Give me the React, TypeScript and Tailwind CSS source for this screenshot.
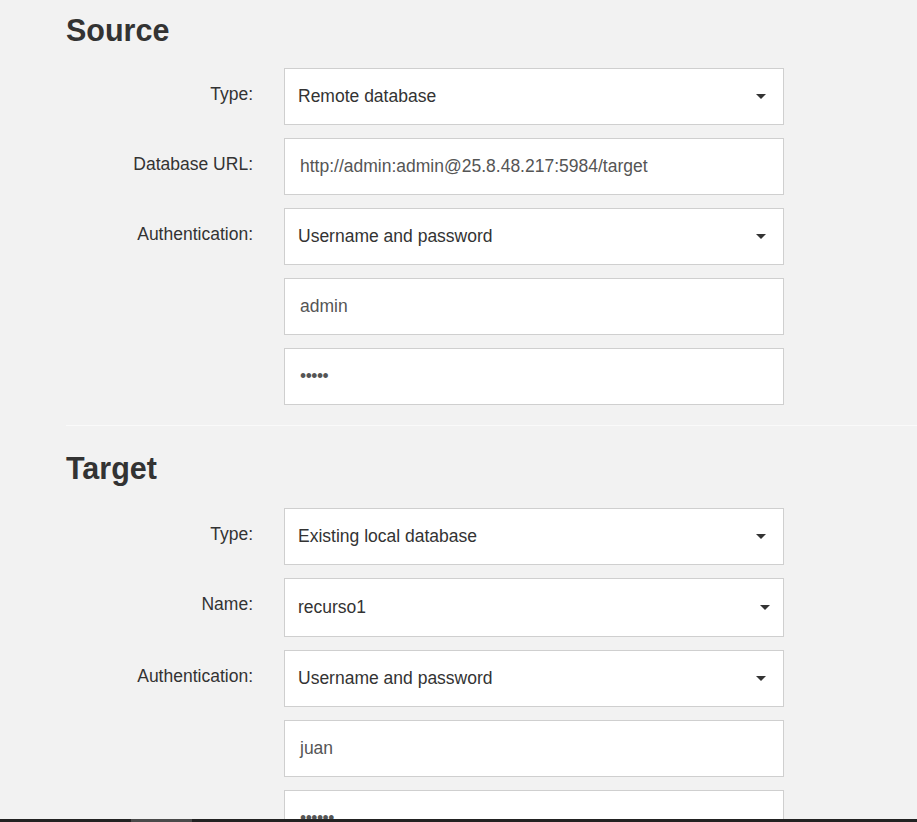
import React from "react";

type Field =
  | { kind: "select"; label?: string; value: string; tall?: boolean; caretPr?: string }
  | { kind: "input"; label?: string; value: string; password?: boolean };

function Caret() {
  return (
    <span className="block h-0 w-0 border-x-[5px] border-t-[5px] border-x-transparent border-t-[#333]" />
  );
}

function Row({ f }: { f: Field }) {
  return (
    <>
      <div className="pt-[16px] text-right text-[17.5px] leading-5 text-[#333]">{f.label ?? ""}</div>
      {f.kind === "select" ? (
        <div
          className={`flex items-center justify-between border border-[#cfcfcf] bg-white pl-[13px] ${
            f.caretPr ?? "pr-[17px]"
          } ${f.tall ? "h-[59px]" : "h-[57px]"}`}
        >
          <span className="text-[17.5px] text-[#333]">{f.value}</span>
          <Caret />
        </div>
      ) : (
        <div className="flex h-[57px] items-center border border-[#cfcfcf] bg-white pl-[15px]">
          <span className={`text-[17.5px] ${f.password ? "text-[#555] tracking-[-0.5px]" : "text-[#555]"}`}>
            {f.value}
          </span>
        </div>
      )}
    </>
  );
}

function Section({ title, fields, first }: { title: string; fields: Field[]; first?: boolean }) {
  return (
    <section>
      <h2
        className={`text-[30.5px] font-bold leading-[30px] text-[#333] ${
          first ? "pt-[15px]" : "pt-[27px]"
        }`}
      >
        {title}
      </h2>
      <div
        className={`grid grid-cols-[187px_500px] gap-x-[31px] gap-y-[13px] ${
          first ? "mt-[23px]" : "mt-[25px]"
        }`}
      >
        {fields.map((f, i) => (
          <Row key={i} f={f} />
        ))}
      </div>
    </section>
  );
}

export default function App() {
  const source: Field[] = [
    { kind: "select", label: "Type:", value: "Remote database" },
    { kind: "input", label: "Database URL:", value: "http://admin:admin@25.8.48.217:5984/target" },
    { kind: "select", label: "Authentication:", value: "Username and password" },
    { kind: "input", value: "admin" },
    { kind: "input", value: "•••••", password: true },
  ];
  const target: Field[] = [
    { kind: "select", label: "Type:", value: "Existing local database" },
    { kind: "select", label: "Name:", value: "recurso1", tall: true, caretPr: "pr-[13px]" },
    { kind: "select", label: "Authentication:", value: "Username and password" },
    { kind: "input", value: "juan" },
    { kind: "input", value: "••••••", password: true },
  ];
  return (
    <div
      className="min-h-screen bg-[#f2f2f2] pb-10 pl-[66px]"
      style={{ fontFamily: '"Liberation Sans", Arial, sans-serif' }}
    >
      <Section title="Source" fields={source} first />
      <div className="mt-[20px] border-t border-[#fafafa]" />
      <Section title="Target" fields={target} />
      <div className="fixed bottom-0 left-0 right-0 flex h-[3px] bg-[#222]">
        <div className="ml-[131px] h-full w-[61px] bg-[#4a4a4a]" />
      </div>
    </div>
  );
}
